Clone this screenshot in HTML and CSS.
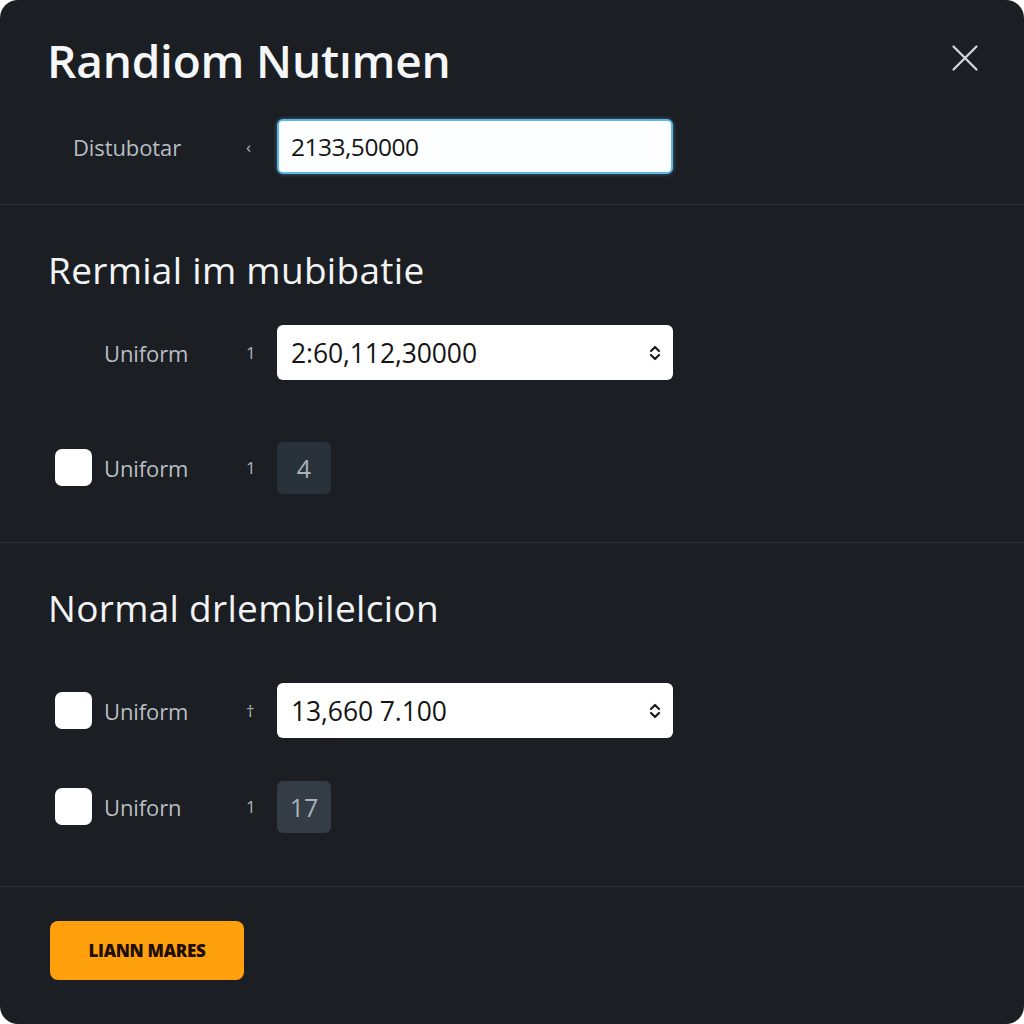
FILE: index.html
```html
<!DOCTYPE html>
<html lang="en">
<head>
    <meta charset="UTF-8">
    <meta name="viewport" content="width=device-width, initial-scale=1.0">
    <title>Randiom Nutımen</title>
    <link rel="stylesheet" href="styles.css">
</head>
<body>
    <div class="modal">
        <div class="header">
            <h1>Randiom Nutımen</h1>
            <button class="close-btn" aria-label="Close">
                <svg width="28" height="28" viewBox="0 0 28 28">
                    <path d="M2.5 2.5 L25.5 25.5 M25.5 2.5 L2.5 25.5" stroke="#d3d6da" stroke-width="2.3" stroke-linecap="round" fill="none"/>
                </svg>
            </button>
        </div>

        <div class="section section-top">
            <div class="row">
                <div class="label-cell plain"><span class="label">Distubotar</span></div>
                <span class="mark">‹</span>
                <input type="text" class="text-input focused" value="2133,50000">
            </div>
        </div>

        <div class="section section-one">
            <h2>Rermial im mubibatie</h2>
            <div class="row row-first">
                <div class="label-cell indent"><span class="label">Uniform</span></div>
                <span class="mark">1</span>
                <div class="select">
                    <span>2:60,112,30000</span>
                    <svg class="chevrons" width="12" height="16" viewBox="0 0 12 16">
                        <path d="M2 6 L6 2 L10 6 M2 10 L6 14 L10 10" stroke="#1c1c1c" stroke-width="2.2" stroke-linecap="round" stroke-linejoin="round" fill="none"/>
                    </svg>
                </div>
            </div>
            <div class="row row-second">
                <div class="label-cell"><span class="checkbox"></span><span class="label">Uniform</span></div>
                <span class="mark">1</span>
                <div class="num-box">4</div>
            </div>
        </div>

        <div class="section section-two">
            <h2>Normal drlembilelcion</h2>
            <div class="row row-first">
                <div class="label-cell"><span class="checkbox"></span><span class="label">Uniform</span></div>
                <span class="mark">†</span>
                <div class="select">
                    <span>13,660 7.100</span>
                    <svg class="chevrons" width="12" height="16" viewBox="0 0 12 16">
                        <path d="M2 6 L6 2 L10 6 M2 10 L6 14 L10 10" stroke="#1c1c1c" stroke-width="2.2" stroke-linecap="round" stroke-linejoin="round" fill="none"/>
                    </svg>
                </div>
            </div>
            <div class="row row-second">
                <div class="label-cell"><span class="checkbox"></span><span class="label">Uniforn</span></div>
                <span class="mark">1</span>
                <div class="num-box light">17</div>
            </div>
        </div>

        <div class="footer">
            <button class="primary-btn">LIANN MARES</button>
        </div>
    </div>
</body>
</html>
```

FILE: styles.css
```css
* {
    margin: 0;
    padding: 0;
    box-sizing: border-box;
    font-family: 'Open Sans', 'Noto Sans', sans-serif;
}

body {
    background-color: #ffffff;
}

.modal {
    width: 1024px;
    height: 1024px;
    background: #1b1e22;
    border-radius: 18px;
    overflow: hidden;
}

.header {
    display: flex;
    justify-content: space-between;
    align-items: center;
    padding: 34px 45px 0 47px;
    height: 86px;
}

h1 {
    color: #f5f6f7;
    font-size: 46px;
    font-weight: 600;
    line-height: 52px;
    letter-spacing: -0.2px;
}

.close-btn {
    background: none;
    border: none;
    cursor: pointer;
    display: flex;
    margin-top: -4px;
}

.section {
    border-bottom: 1px solid #2e3237;
}

.section-top {
    padding: 33px 0 30px;
}

.section-one {
    padding: 45px 0 47px;
}

.section-two {
    padding: 45px 0 52px;
}

h2 {
    color: #f2f3f4;
    font-size: 37px;
    font-weight: 500;
    line-height: 40px;
    padding-left: 48px;
    letter-spacing: 0.3px;
}

.row {
    display: grid;
    grid-template-columns: 185px 37px 396px;
    align-items: center;
    height: 55px;
    padding-left: 55px;
}

.section-one .row-first {
    margin-top: 35px;
}

.section-one .row-second {
    margin-top: 60px;
}

.section-two .row-first {
    margin-top: 55px;
}

.section-two .row-second {
    margin-top: 41px;
}

.label-cell {
    display: flex;
    align-items: center;
    gap: 12px;
}

.label-cell.plain {
    padding-left: 18px;
}

.label-cell.indent {
    padding-left: 49px;
}

.label {
    color: #b8bdc3;
    font-size: 22px;
    letter-spacing: -0.1px;
}

.checkbox {
    width: 37px;
    height: 37px;
    background: #ffffff;
    border-radius: 7px;
}

.mark {
    color: #aeb3b9;
    font-size: 17px;
    padding-left: 6px;
}

.text-input {
    height: 55px;
    width: 396px;
    padding: 0 12px;
    font-size: 24.5px;
    letter-spacing: -0.5px;
    color: #151515;
    background: #fdfeff;
    border: 2px solid #5db6e6;
    border-radius: 6px;
    outline: none;
    box-shadow: 0 0 4px rgba(93, 182, 230, 0.5);
}

.select {
    height: 55px;
    display: flex;
    justify-content: space-between;
    align-items: center;
    padding: 0 12px 0 14px;
    background: #ffffff;
    border-radius: 6px;
    font-size: 26.5px;
    letter-spacing: -0.1px;
    color: #151515;
}

.num-box {
    width: 54px;
    height: 52px;
    display: flex;
    align-items: center;
    justify-content: center;
    background: #29313a;
    border-radius: 6px;
    color: #a9b1ba;
    font-size: 25px;
}

.num-box.light {
    background: #343c45;
}

.footer {
    padding: 34px 0 0 50px;
}

.primary-btn {
    width: 194px;
    height: 59px;
    background: #ffa00c;
    border: none;
    border-radius: 8px;
    color: #1e0f00;
    font-size: 17px;
    font-weight: 800;
    letter-spacing: -0.3px;
    cursor: pointer;
}
```
